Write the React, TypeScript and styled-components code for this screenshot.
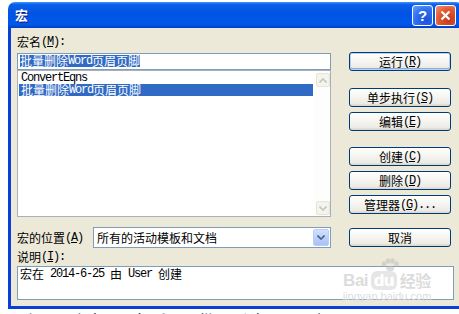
import React from 'react';
import styled, { createGlobalStyle, css } from 'styled-components';

const GlobalStyle = createGlobalStyle`
  html, body {
    margin: 0;
    padding: 0;
    background: #ffffff;
    overflow: hidden;
  }
  body {
    font-family: "Noto Sans CJK SC", sans-serif;
    font-size: 12px;
    line-height: 12px;
  }
`;

const Page = styled.div`
  width: 459px;
  height: 314px;
  box-sizing: border-box;
  padding: 2px 0 0 8px;
  overflow: hidden;
`;

const Window = styled.div`
  width: 455px;
  display: flex;
  flex-direction: column;
`;

const TitleBar = styled.div`
  height: 26px;
  display: flex;
  align-items: center;
  padding: 0 7px;
  border-radius: 7px 7px 0 0;
  background: linear-gradient(180deg, #3d95ff 0%, #0a5ee8 10%, #0054e3 45%, #0058ea 85%, #0046d2 96%, #003bc0 100%);
`;

const Title = styled.div`
  flex: 1;
  color: #ffffff;
  font: bold 13px/14px "Noto Sans CJK SC", sans-serif;
  text-shadow: 1px 1px 0 #0a1a7a;
`;

const CapButton = styled.div<{ $kind: 'help' | 'close' }>`
  width: 21px;
  height: 21px;
  box-sizing: border-box;
  border: 1px solid #ffffff;
  border-radius: 3px;
  margin-left: 2px;
  display: flex;
  align-items: center;
  justify-content: center;
  color: #ffffff;
  font: bold 15px/15px "Liberation Sans", sans-serif;
  ${p => p.$kind === 'help'
    ? css`background: radial-gradient(circle at 70% 75%, #1a52dc 0%, #2f6ff0 55%, #6ea2ff 100%);`
    : css`background: radial-gradient(circle at 70% 75%, #c1391a 0%, #e0582f 55%, #f29878 100%);`}
`;

const Frame = styled.div`
  background: #ece9d8;
  border: 3px solid #0a3fd8;
  border-top: 0;
  padding: 8px 6px 6px;
`;

const Main = styled.div`
  display: grid;
  grid-template-columns: 314px 102px;
  column-gap: 18px;
  align-items: start;
`;

const LeftCol = styled.div`
  display: flex;
  flex-direction: column;
`;

const FieldLabel = styled.div`
  height: 12px;
  display: flex;
  white-space: nowrap;
  color: #000000;
`;

const Half = styled.span<{ $u?: boolean }>`
  height: 12px;
  line-height: 13px;
  font-family: "Liberation Mono", monospace;
  font-size: 12px;
  letter-spacing: -1.2px;
  white-space: pre;
  text-decoration: ${p => (p.$u ? 'underline' : 'none')};
`;

const Full = styled.span<{ $u?: boolean }>`
  height: 12px;
  line-height: 12px;
  font-family: "Noto Sans CJK SC", sans-serif;
  font-size: 12px;
  white-space: pre;
  text-decoration: ${p => (p.$u ? 'underline' : 'none')};
`;

// "&X" marks the access key, like a Windows resource string
const T = ({ t }: { t: string }) => {
  const runs: { s: string; half: boolean; u: boolean }[] = [];
  for (let i = 0; i < t.length; i++) {
    let c = t[i];
    let u = false;
    if (c === '&' && i + 1 < t.length) {
      c = t[++i];
      u = true;
    }
    const half = c.charCodeAt(0) < 0x2000;
    const last = runs[runs.length - 1];
    if (last && last.half === half && last.u === u) last.s += c;
    else runs.push({ s: c, half, u });
  }
  return (
    <>
      {runs.map((r, i) =>
        r.half ? <Half key={i} $u={r.u}>{r.s}</Half> : <Full key={i} $u={r.u}>{r.s}</Full>
      )}
    </>
  );
};

const NameBox = styled.div`
  margin-top: 5px;
  height: 17px;
  box-sizing: border-box;
  border: 1px solid #7f9db9;
  background: #ffffff;
  padding: 1px 0 0 2px;
  display: flex;
  align-items: flex-start;
`;

const Sel = styled.div`
  display: flex;
  height: 12px;
  background: #316ac5;
  color: #ffffff;
`;

const ListBox = styled.div`
  height: 147px;
  box-sizing: border-box;
  border: 1px solid #a9b0b9;
  background: #ffffff;
  display: flex;
`;

const Items = styled.div`
  flex: 1;
  padding: 1px 1px 0 1px;
`;

const Item = styled.div<{ $sel?: boolean }>`
  height: 12px;
  display: flex;
  padding-left: 2px;
  white-space: nowrap;
  color: ${p => (p.$sel ? '#ffffff' : '#000000')};
  background: ${p => (p.$sel ? '#316ac5' : 'transparent')};
`;

const ScrollBar = styled.div`
  width: 16px;
  box-sizing: border-box;
  padding: 2px 1px 1px 2px;
  background: #fdfdfb;
  display: flex;
  flex-direction: column;
  justify-content: space-between;
`;

const ScrollArrow = styled.div`
  width: 14px;
  height: 14px;
  box-sizing: border-box;
  border: 1px solid #e6e3d8;
  border-radius: 2px;
  background: #f4f3ee;
  display: flex;
  align-items: center;
  justify-content: center;
`;

const LocRow = styled.div`
  margin-top: 10px;
  height: 21px;
  display: flex;
  align-items: center;
  justify-content: space-between;
`;

const Combo = styled.div`
  width: 238px;
  height: 21px;
  box-sizing: border-box;
  border: 1px solid #7f9db9;
  background: #ffffff;
  display: flex;
  align-items: center;
  padding: 0 1px 0 3px;
`;

const ComboText = styled.div`
  flex: 1;
  height: 12px;
  display: flex;
  white-space: nowrap;
`;

const DropButton = styled.div`
  width: 16px;
  height: 17px;
  box-sizing: border-box;
  border: 1px solid #b9cdf6;
  border-radius: 2px;
  background: linear-gradient(180deg, #d2e0fd 0%, #b7cdfa 60%, #a9c2f6 100%);
  display: flex;
  align-items: center;
  justify-content: center;
`;

const ButtonCol = styled.div`
  display: flex;
  flex-direction: column;
`;

const Btn = styled.div<{ $top: number; $def?: boolean }>`
  margin-top: ${p => p.$top}px;
  height: 19px;
  box-sizing: border-box;
  border: 1px solid #003c74;
  border-radius: 3px;
  background: linear-gradient(180deg, #ffffff 0%, #f6f5f1 45%, #ecebe5 85%, #d8d2c6 100%);
  display: flex;
  align-items: center;
  justify-content: center;
  color: #000000;
  white-space: nowrap;
  ${p => p.$def && css`
    box-shadow: inset 0 0 0 1px #b8d0f5, inset 0 -1px 0 1px #89ade4;
  `}
`;

const DescLabel = styled(FieldLabel)`
  margin-top: 3px;
`;

const DescBox = styled.div`
  position: relative;
  margin-top: 3px;
  height: 34px;
  box-sizing: border-box;
  border: 1px solid #7f9db9;
  background: #ffffff;
  padding: 1px 0 0 2px;
  display: flex;
  align-items: flex-start;
  white-space: nowrap;
`;

const Watermark = styled.div`
  position: absolute;
  left: 324px;
  top: -9px;
  width: 90px;
  display: flex;
  flex-direction: column;
  align-items: center;
  color: rgba(190, 190, 190, 0.55);
  text-shadow: 0 0 1px #ffffff;
  pointer-events: none;
`;

const Paw = styled.svg`
  display: block;
  margin-left: 6px;
`;

const Brand = styled.div`
  display: flex;
  align-items: center;
  font: bold 17px/19px "Liberation Sans", sans-serif;
  letter-spacing: -0.5px;
`;

const BrandDu = styled.span`
  margin: 0 3px;
  padding: 0 3px;
  border-radius: 6px;
  background: rgba(200, 200, 200, 0.45);
  color: #ffffff;
`;

const BrandCn = styled.span`
  font: bold 16px/19px "Noto Sans CJK SC", sans-serif;
`;

const Url = styled.div`
  font: 11px/12px "Liberation Sans", sans-serif;
`;

const Below = styled.div`
  padding: 1px 0 0 15px;
  font: 16px/20px "Noto Sans CJK SC", sans-serif;
  color: #000000;
  white-space: nowrap;
`;

const Chevron = ({ up, color }: { up?: boolean; color: string }) => (
  <svg width="8" height="5" viewBox="0 0 8 5">
    <path d={up ? 'M0.5 4.5 L4 1 L7.5 4.5' : 'M0.5 0.5 L4 4 L7.5 0.5'} fill="none" stroke={color} strokeWidth="1.6" />
  </svg>
);

const buttons = [
  { label: '运行(&R)', top: 16, def: true },
  { label: '单步执行(&S)', top: 17 },
  { label: '编辑(&E)', top: 5 },
  { label: '创建(&C)', top: 16 },
  { label: '删除(&D)', top: 5 },
  { label: '管理器(&G)...', top: 5 },
  { label: '取消', top: 14 },
];

const App = () => {
  return (
    <Page>
      <GlobalStyle />
      <Window>
        <TitleBar>
          <Title>宏</Title>
          <CapButton $kind="help">?</CapButton>
          <CapButton $kind="close">
            <svg width="11" height="11" viewBox="0 0 11 11">
              <path d="M1.5 1.5 L9.5 9.5 M9.5 1.5 L1.5 9.5" stroke="#ffffff" strokeWidth="2.2" />
            </svg>
          </CapButton>
        </TitleBar>
        <Frame>
          <Main>
            <LeftCol>
              <FieldLabel><T t="宏名(&M):" /></FieldLabel>
              <NameBox>
                <Sel><T t="批量删除Word页眉页脚" /></Sel>
              </NameBox>
              <ListBox>
                <Items>
                  <Item><T t="ConvertEqns" /></Item>
                  <Item $sel><T t="批量删除Word页眉页脚" /></Item>
                </Items>
                <ScrollBar>
                  <ScrollArrow><Chevron up color="#c8c5b6" /></ScrollArrow>
                  <ScrollArrow><Chevron color="#c8c5b6" /></ScrollArrow>
                </ScrollBar>
              </ListBox>
              <LocRow>
                <FieldLabel><T t="宏的位置(&A)" /></FieldLabel>
                <Combo>
                  <ComboText><T t="所有的活动模板和文档" /></ComboText>
                  <DropButton><Chevron color="#4d6185" /></DropButton>
                </Combo>
              </LocRow>
            </LeftCol>
            <ButtonCol>
              {buttons.map(b => (
                <Btn key={b.label} $top={b.top} $def={b.def}>
                  <T t={b.label} />
                </Btn>
              ))}
            </ButtonCol>
          </Main>
          <DescLabel><T t="说明(&I):" /></DescLabel>
          <DescBox>
            <T t="宏在 2014-6-25 由 User 创建" />
            <Watermark>
              <Paw width="20" height="13" viewBox="0 0 20 13">
                <g fill="rgba(190,190,190,0.55)">
                  <ellipse cx="4" cy="6" rx="2.2" ry="2.8" />
                  <ellipse cx="8" cy="3" rx="2.2" ry="2.8" />
                  <ellipse cx="12.5" cy="3" rx="2.2" ry="2.8" />
                  <ellipse cx="16.5" cy="6" rx="2.2" ry="2.8" />
                  <ellipse cx="10.2" cy="10.5" rx="4" ry="2.5" />
                </g>
              </Paw>
              <Brand>
                Bai<BrandDu>du</BrandDu><BrandCn>经验</BrandCn>
              </Brand>
              <Url>jingyan.baidu.com</Url>
            </Watermark>
          </DescBox>
        </Frame>
      </Window>
      <Below>上面那个宏，运行后即可批量删除页眉页脚。</Below>
    </Page>
  );
};

export default App;
